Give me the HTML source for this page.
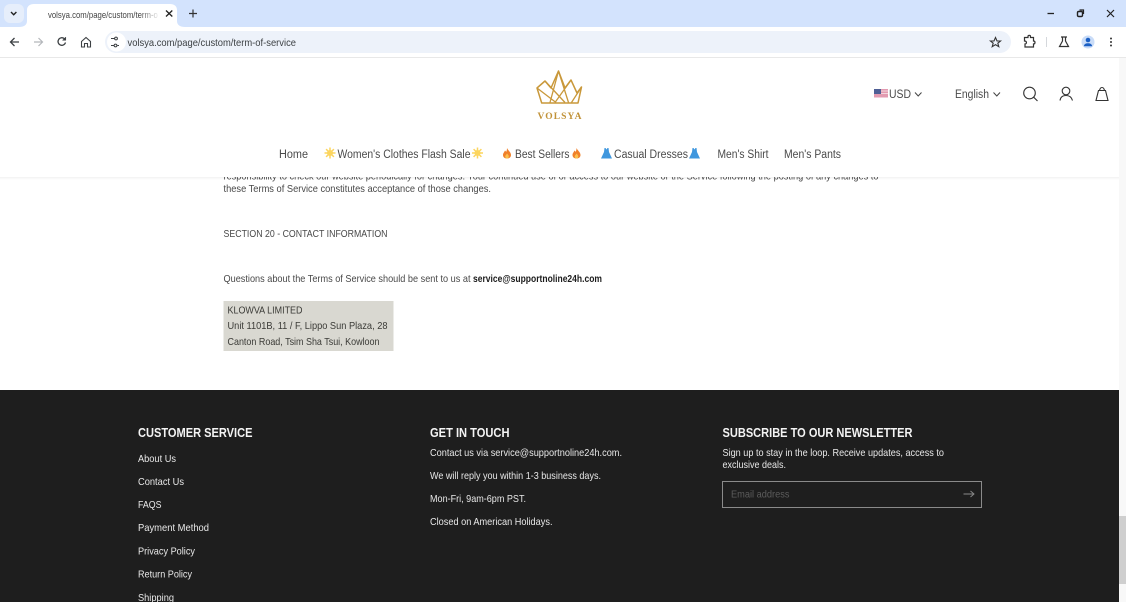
<!DOCTYPE html>
<html><head><meta charset="utf-8"><title>Volsya</title>
<style>
html,body{margin:0;padding:0;width:1126px;height:602px;overflow:hidden;background:#fff}
svg{display:block;filter:blur(.25px)}
text{font-family:"Liberation Sans",sans-serif;font-size:11px;white-space:pre}
.b{fill:#484848;font-size:10.5px}
.n{fill:#4a4a4a;font-size:11.5px}
.f{fill:#e8e8e8;font-size:10.5px}
.h{fill:#f4f4f4;font-size:12.5px;font-weight:bold}
.a{fill:#3a3a36;font-size:10.5px}
</style></head><body>
<svg width="1126" height="602" viewBox="0 0 1126 602" xmlns="http://www.w3.org/2000/svg">
<defs>
<linearGradient id="fade" x1="0" x2="1"><stop offset="0" stop-color="#fff" stop-opacity="0"/><stop offset="1" stop-color="#fff"/></linearGradient>
<linearGradient id="sh" x1="0" x2="0" y1="0" y2="1"><stop offset="0" stop-color="#000" stop-opacity=".05"/><stop offset="1" stop-color="#000" stop-opacity="0"/></linearGradient>
<g id="sun"><circle cx="0" cy="0" r="3" fill="#fcd55f"/><path d="M0-5.500V5.500M-5.500 0H5.500M-3.900-3.900L3.900 3.900M-3.900 3.900L3.900-3.900" stroke="#fcd55f" stroke-width="1.500"/></g>
<g id="fire"><path d="M0-5.500C1-3 4-1.500 4 1.500C4 3.800 2.200 5 0 5C-2.200 5-4 3.800-4 1.500C-4-.5-2.500-1.500-2-3C-1.300-2.500-1-2-.9-1.500C-.3-2.500 0-4 0-5.500Z" fill="#f0802a"/><path d="M0 0C1 1 1.800 2 1.800 3C1.800 4.200 1 5 0 5C-1 5-1.800 4.200-1.800 3C-1.800 2-.7 1.200 0 0Z" fill="#fbc04c"/></g>
<g id="dress"><path d="M-2-5.500H-1L0-4L1-5.500H2L2.500-1.500L5.500 5H-5.500L-2.500-1.500Z" fill="#3f97de"/></g>
</defs>

<!-- page -->
<rect width="1126" height="602" fill="#fff"/>

<!-- content -->
<text class="b" x="223.500" y="179.500" textLength="655" lengthAdjust="spacingAndGlyphs">responsibility to check our website periodically for changes. Your continued use of or access to our website or the Service following the posting of any changes to</text>
<text class="b" x="223.500" y="192" textLength="267.500" lengthAdjust="spacingAndGlyphs">these Terms of Service constitutes acceptance of those changes.</text>
<text class="b" x="223.500" y="237" textLength="164" lengthAdjust="spacingAndGlyphs">SECTION 20 - CONTACT INFORMATION</text>
<text class="b" x="223.500" y="282" textLength="247" lengthAdjust="spacingAndGlyphs">Questions about the Terms of Service should be sent to us at</text>
<text class="b" x="473" y="282" textLength="129" lengthAdjust="spacingAndGlyphs" style="font-weight:bold;fill:#1c1c1c">service@supportnoline24h.com</text>

<rect x="223.500" y="301" width="170" height="50" fill="#d9d8d1"/>
<text class="a" x="227.500" y="313.500" textLength="75" lengthAdjust="spacingAndGlyphs">KLOWVA LIMITED</text>
<text class="a" x="227.500" y="329" textLength="160" lengthAdjust="spacingAndGlyphs">Unit 1101B, 11 / F, Lippo Sun Plaza, 28</text>
<text class="a" x="227.500" y="345" textLength="152" lengthAdjust="spacingAndGlyphs">Canton Road, Tsim Sha Tsui, Kowloon</text>

<!-- header -->
<rect x="0" y="58" width="1119" height="119" fill="#fff"/>
<rect x="0" y="177" width="1119" height="3" fill="url(#sh)"/>

<!-- logo -->
<g fill="none" stroke="#c9983a" stroke-width="1.300" stroke-linejoin="round">
<path d="M558.500 71L551 88L545 81L537 88L541.700 103H578L581.500 87L577 93L571 80L565 88Z" stroke-width="1.500"/>
<path d="M537 88L556 102.500M545 81L565 102.500M558.500 71L550 102.500M558.500 71L568.500 102.500M571 80L555 102.500M581.500 87L571.500 102.500"/>
</g>
<text x="537.500" y="119" textLength="44" lengthAdjust="spacing" style="font-family:'Liberation Serif',serif;font-size:9.500px;font-weight:bold;fill:#c19238">VOLSYA</text>

<!-- currency etc -->
<rect x="874" y="89" width="14" height="8.500" fill="#e29ab0"/>
<rect x="874" y="90.500" width="14" height="1" fill="#f3d5dd"/>
<rect x="874" y="93" width="14" height="1" fill="#f3d5dd"/>
<rect x="874" y="89" width="7" height="5" fill="#4f5f95"/>
<text class="n" x="889" y="98" textLength="22" lengthAdjust="spacingAndGlyphs">USD</text>
<path d="M915 92.500L918.200 96L921.500 92.500" fill="none" stroke="#444" stroke-width="1"/>
<text class="n" x="955" y="98" textLength="34" lengthAdjust="spacingAndGlyphs">English</text>
<path d="M993.500 92.500L996.800 96L1000 92.500" fill="none" stroke="#444" stroke-width="1"/>
<g fill="none" stroke="#333" stroke-width="1.100">
<circle cx="1029.500" cy="93" r="5.800"/><path d="M1033.800 97.300L1037.500 101"/>
<circle cx="1066" cy="91" r="3.800"/><path d="M1060 100.500C1060.500 97 1062.800 95.500 1066 95.500C1069.200 95.500 1071.500 97 1072.500 100.500"/>
<path d="M1098.500 90.500L1096 100.500H1108L1105.500 90.500ZM1099.500 90.500C1100 88 1101 87.500 1102 87.500C1103 87.500 1104 88 1104.500 90.500"/>
</g>

<!-- nav -->
<text class="n" x="279" y="158" textLength="29" lengthAdjust="spacingAndGlyphs">Home</text>
<use href="#sun" x="330" y="153"/>
<text class="n" x="337.500" y="158" textLength="133" lengthAdjust="spacingAndGlyphs">Women's Clothes Flash Sale</text>
<use href="#sun" x="477.500" y="153"/>
<use href="#fire" x="507" y="153.500"/>
<text class="n" x="515" y="158" textLength="54.500" lengthAdjust="spacingAndGlyphs">Best Sellers</text>
<use href="#fire" x="576.500" y="153.500"/>
<use href="#dress" x="606.500" y="153.500"/>
<text class="n" x="614" y="158" textLength="74" lengthAdjust="spacingAndGlyphs">Casual Dresses</text>
<use href="#dress" x="694.500" y="153.500"/>
<text class="n" x="717.500" y="158" textLength="51" lengthAdjust="spacingAndGlyphs">Men's Shirt</text>
<text class="n" x="784" y="158" textLength="57" lengthAdjust="spacingAndGlyphs">Men's Pants</text>

<!-- footer -->
<rect x="0" y="390" width="1119" height="212" fill="#1e1e1e"/>
<text class="h" x="138" y="437" textLength="114.500" lengthAdjust="spacingAndGlyphs">CUSTOMER SERVICE</text>
<text class="f" x="138" y="462" textLength="38" lengthAdjust="spacingAndGlyphs">About Us</text>
<text class="f" x="138" y="485" textLength="46" lengthAdjust="spacingAndGlyphs">Contact Us</text>
<text class="f" x="138" y="508" textLength="23.500" lengthAdjust="spacingAndGlyphs">FAQS</text>
<text class="f" x="138" y="531" textLength="71" lengthAdjust="spacingAndGlyphs">Payment Method</text>
<text class="f" x="138" y="554.500" textLength="57" lengthAdjust="spacingAndGlyphs">Privacy Policy</text>
<text class="f" x="138" y="577.500" textLength="54" lengthAdjust="spacingAndGlyphs">Return Policy</text>
<text class="f" x="138" y="601" textLength="36" lengthAdjust="spacingAndGlyphs">Shipping</text>

<text class="h" x="430" y="437" textLength="79.500" lengthAdjust="spacingAndGlyphs">GET IN TOUCH</text>
<text class="f" x="430" y="456" textLength="192" lengthAdjust="spacingAndGlyphs">Contact us via service@supportnoline24h.com.</text>
<text class="f" x="430" y="479" textLength="171" lengthAdjust="spacingAndGlyphs">We will reply you within 1-3 business days.</text>
<text class="f" x="430" y="502" textLength="96" lengthAdjust="spacingAndGlyphs">Mon-Fri, 9am-6pm PST.</text>
<text class="f" x="430" y="525" textLength="122.500" lengthAdjust="spacingAndGlyphs">Closed on American Holidays.</text>

<text class="h" x="722.500" y="437" textLength="190" lengthAdjust="spacingAndGlyphs">SUBSCRIBE TO OUR NEWSLETTER</text>
<text class="f" x="722.500" y="456" textLength="221.500" lengthAdjust="spacingAndGlyphs">Sign up to stay in the loop. Receive updates, access to</text>
<text class="f" x="722.500" y="468" textLength="63.500" lengthAdjust="spacingAndGlyphs">exclusive deals.</text>
<rect x="722.500" y="481.500" width="259" height="26" fill="none" stroke="#8a8a8a" stroke-width="1"/>
<text class="f" x="731" y="497.500" textLength="58.500" lengthAdjust="spacingAndGlyphs" style="fill:#5c5c5c">Email address</text>
<path d="M963.500 494H973.500M970.500 491L974 494L970.500 497" fill="none" stroke="#8a8a8a" stroke-width=".9"/>

<!-- scrollbar -->
<rect x="1119" y="58" width="7" height="544" fill="#f8f8f8"/>
<rect x="1119" y="516" width="7" height="68" fill="#cfcfcf"/>

<!-- chrome -->
<rect x="0" y="0" width="1126" height="27" fill="#d3e3fd"/>
<rect x="0" y="27" width="1126" height="30" fill="#fff"/>
<rect x="0" y="57" width="1126" height="1" fill="#e8e8e8"/>
<rect x="4" y="4" width="20" height="19" rx="6" fill="#e6eefb"/>
<path d="M11 12L13.700 14.700L16.400 12" fill="none" stroke="#222" stroke-width="1.400"/>
<path d="M19 27C24 27 27 25 27 21V10C27 6 30 4 34 4H170C174 4 177 6 177 10V21C177 25 180 27 185 27Z" fill="#fff"/>
<text x="48" y="18" textLength="112" lengthAdjust="spacingAndGlyphs" style="font-size:9.500px;fill:#444">volsya.com/page/custom/term-of</text>
<rect x="140" y="6" width="20" height="18" fill="url(#fade)"/>
<rect x="158" y="6" width="5" height="18" fill="#fff"/>
<path d="M166 10.500L172.300 16.500M172.300 10.500L166 16.500" stroke="#222" stroke-width="1.300"/>
<path d="M193 9.500V17.500M189 13.500H197" stroke="#333" stroke-width="1.200"/>
<path d="M1047.500 13.500H1054" stroke="#222" stroke-width="1.300"/>
<rect x="1077.500" y="11.500" width="5" height="5" rx="1.200" fill="none" stroke="#222" stroke-width="1.400"/>
<path d="M1079.500 10H1083.500V14" fill="none" stroke="#222" stroke-width="1.200"/>
<path d="M1107 10L1114 17M1114 10L1107 17" stroke="#222" stroke-width="1.200"/>

<path d="M19 42H11M14.500 38L10.500 42L14.500 46" fill="none" stroke="#3c4043" stroke-width="1.300"/>
<path d="M34 42H42M38.500 38L42.500 42L38.500 46" fill="none" stroke="#b4b7bb" stroke-width="1.200"/>
<path d="M65.500 42.500A3.800 3.800 0 1 1 64.500 38.800" fill="none" stroke="#3c4043" stroke-width="1.300"/>
<path d="M65.800 37V40.300H62.500Z" fill="#3c4043" stroke="#3c4043" stroke-width=".5"/>
<path d="M81.500 41.500L86 37.500L90.500 41.500V47H87.500V43.500H84.500V47H81.500Z" fill="none" stroke="#3c4043" stroke-width="1.100"/>

<rect x="105" y="31" width="906" height="22" rx="11" fill="#edf2fa"/>
<rect x="107" y="32.500" width="19" height="19" rx="9.500" fill="#fff"/>
<path d="M111 38.500H114.500M117.500 45.500H119M111 45.500H114" stroke="#3c4043" stroke-width="1.100"/>
<circle cx="116" cy="38.500" r="1.400" fill="none" stroke="#3c4043"/><circle cx="115.500" cy="45.500" r="1.400" fill="none" stroke="#3c4043"/>
<text x="127.500" y="46" textLength="168.500" lengthAdjust="spacingAndGlyphs" style="font-size:10.500px;fill:#3c4043">volsya.com/page/custom/term-of-service</text>
<path d="M995.500 37.500L997 41H1000.500L997.800 43.200L998.800 46.700L995.500 44.700L992.200 46.700L993.200 43.200L990.500 41H994Z" fill="none" stroke="#333" stroke-width="1.100"/>
<path d="M1024.500 37.500H1028V36.500C1028 35 1030.500 35 1030.500 36.500V37.500H1033.500V41C1035.500 41 1035.500 44 1033.500 44V47H1025V44C1027 44 1027 41 1024.500 41Z" fill="none" stroke="#333" stroke-width="1.200"/>
<rect x="1046" y="37" width="1" height="10" fill="#d5d8dc"/>
<path d="M1061 37H1067M1062.500 37V41L1059.500 46.500H1068.500L1065.500 41V37" fill="none" stroke="#333" stroke-width="1.200"/>
<circle cx="1088" cy="42" r="6.500" fill="#c9dcf8"/>
<circle cx="1088" cy="40" r="2.300" fill="#1a5fc4"/>
<path d="M1083.800 46.300C1084.300 43.800 1086 43.300 1088 43.300C1090 43.300 1091.700 43.800 1092.200 46.300Z" fill="#1a5fc4"/>
<circle cx="1111" cy="38.500" r="1" fill="#333"/><circle cx="1111" cy="42" r="1" fill="#333"/><circle cx="1111" cy="45.500" r="1" fill="#333"/>
</svg>
</body></html>
